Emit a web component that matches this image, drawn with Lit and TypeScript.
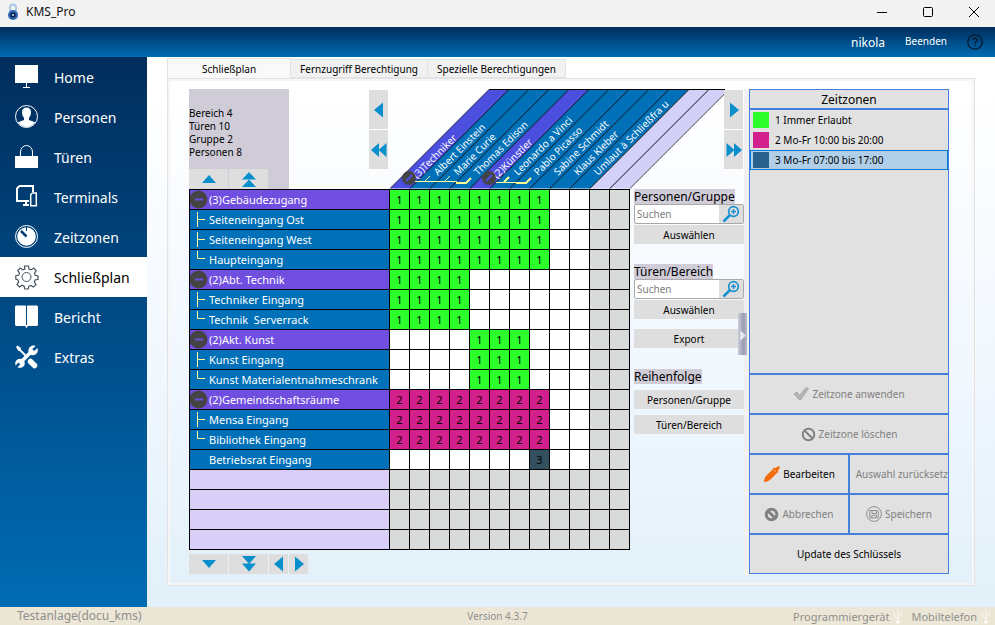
import { LitElement, html, svg, css, nothing } from "lit";
import { customElement, state } from "lit/decorators.js";
import { classMap } from "lit/directives/class-map.js";

type Kind = "group" | "mid" | "last" | "plain" | "empty";

interface Door {
  label: string;
  kind: Kind;
  cells: string;
}

const DOORS: Door[] = [
  { label: "(3)Gebäudezugang", kind: "group", cells: "11111111  " },
  { label: "Seiteneingang Ost", kind: "mid", cells: "11111111  " },
  { label: "Seiteneingang West", kind: "mid", cells: "11111111  " },
  { label: "Haupteingang", kind: "last", cells: "11111111  " },
  { label: "(2)Abt. Technik", kind: "group", cells: "1111      " },
  { label: "Techniker Eingang", kind: "mid", cells: "1111      " },
  { label: "Technik  Serverrack", kind: "last", cells: "1111      " },
  { label: "(2)Akt. Kunst", kind: "group", cells: "    111   " },
  { label: "Kunst Eingang", kind: "mid", cells: "    111   " },
  { label: "Kunst Materialentnahmeschrank", kind: "last", cells: "    111   " },
  { label: "(2)Gemeindschaftsräume", kind: "group", cells: "22222222  " },
  { label: "Mensa Eingang", kind: "mid", cells: "22222222  " },
  { label: "Bibliothek Eingang", kind: "last", cells: "22222222  " },
  { label: "Betriebsrat Eingang", kind: "plain", cells: "       3  " },
  { label: "", kind: "empty", cells: "" },
  { label: "", kind: "empty", cells: "" },
  { label: "", kind: "empty", cells: "" },
  { label: "", kind: "empty", cells: "" },
];

const PEOPLE: { name: string; kind: Kind }[] = [
  { name: "(3)Techniker", kind: "group" },
  { name: "Albert Einstein", kind: "mid" },
  { name: "Marie Curie", kind: "mid" },
  { name: "Thomas Edison", kind: "last" },
  { name: "(2)Künstler", kind: "group" },
  { name: "Leonardo a Vinci", kind: "mid" },
  { name: "Pablo Picasso", kind: "last" },
  { name: "Sabine Schmidt", kind: "plain" },
  { name: "Klaus Kleber", kind: "plain" },
  { name: "Umlaut ä Schließfra u", kind: "plain" },
  { name: "", kind: "empty" },
  { name: "", kind: "empty" },
];

const NAV = [
  "Home",
  "Personen",
  "Türen",
  "Terminals",
  "Zeitzonen",
  "Schließplan",
  "Bericht",
  "Extras",
];

const navIcons: Record<string, unknown> = {
  Home: svg`<path fill="#fff" d="M0 0h23v18H0z"/><path stroke="#fff" d="M11.5 18v4M8 22.500h7"/>`,
  Personen: svg`<circle cx="11.500" cy="11.500" r="11" fill="none" stroke="#fff"/>
    <path fill="#fff" d="M7 7c0-3 2-4.500 4.500-4.500S16 4 16 7c0 2.500-.8 4.500-2 5.700v2.300l6 2.200A10.500 10.500 0 0 1 11.500 22 10.500 10.500 0 0 1 3 17.200L9 15v-2.300C7.800 11.500 7 9.500 7 7z"/>`,
  Türen: svg`<path fill="#fff" d="M0 11h23v12H0z"/><path fill="none" stroke="#fff" d="M5.500 11V7a6 6.500 0 0 1 12 0v4"/>`,
  Terminals: svg`<path fill="none" stroke="#fff" stroke-width="2" d="M14 16H2V3.500L4.500 1H18v6M8 20h6M11 16v4"/>
    <path fill="none" stroke="#fff" stroke-width="1.500" d="M15.700 20.700V9.500L17.500 8h3.800v12.700z"/>`,
  Zeitzonen: svg`<circle cx="11.500" cy="11.500" r="11" fill="none" stroke="#fff"/><circle cx="11.500" cy="11.500" r="9.300" fill="#fff"/>
    <path stroke="#003c74" stroke-width="2.500" d="m6 6 5.500 5.500"/><path stroke="#003c74" stroke-width="1" d="M11.500 1.500V6"/>`,
  Schließplan: svg`<path fill="none" stroke="#44525f" stroke-width="1.200" d="M9.500 1h4l.6 3 2 .9 2.600-1.800 2.500 2.500-1.700 2.700.8 2 2.700.7v3.300l-2.800.7-.9 2 1.700 2.600-2.700 2.500-2.500-1.700-2 .9-.6 2.700h-3.400l-.7-2.800-2.100-.9-2.500 1.700-2.500-2.500 1.700-2.600-.9-2.100L.8 14v-3.300l2.900-.6.800-2L2.800 5.500l2.500-2.400L7.900 4.900l1.900-.8z"/>
    <circle cx="11.500" cy="12" r="4.500" fill="none" stroke="#44525f"/>`,
  Bericht: svg`<path fill="#fff" d="M0 1.500 1 .500h9.500l.5.500v20H1L0 20zM12 1l.5-.5H22l1 1V20l-1 1H12zM10.500 20h2v2l-1 1-1-1z"/>`,
  Extras: svg`<path stroke="#fff" stroke-width="1.800" d="m3 3 8 8"/><path fill="#fff" d="m1 2 1.500-1.500L6 3 5.500 5.500 3.500 6z"/>
    <path stroke="#fff" stroke-width="5.500" stroke-linecap="round" d="m15.500 16.500 4 4"/>
    <path stroke="#fff" stroke-width="3.600" d="M4.500 18.500 18 5"/>
    <path fill="#fff" d="M20.500.9 17 4.300l2 2 3.400-3.300c1.400 3.600-1 7.500-5 7.200-1.600 0-3.600-1.700-4-3.800C13 2.600 16.700-.4 20.500.9zM2.400 22.300l3.200-3.300-2-1.800-3 3.200c-1.300-3.800 1.400-7 5-6.600 2.200.1 4 2 4.200 4.200.3 3.400-3.700 6-7.400 4.300z"/>`,
};

const arrows: Record<string, string> = {
  up: "M3 14 10 6l7 8z",
  up2: "M3 10.500 10 3l7 7.500zM3 18l7-7.500 7 7.500z",
  down: "M3 6h14l-7 8z",
  down2: "M3 2h14l-7 8zM3 9.500h14l-7 8z",
  left: "M14 2.500v15L5 10z",
  left2: "M10 3v14L2 10zM17.500 3v14L9.500 10z",
  right: "M6 2.500v15L15 10z",
  right2: "M10 3v14l8-7zM2.500 3v14l8-7z",
};

const arrow = (kind: string, label: string, cls: string) => html`
  <button class="arrow ${cls}" aria-label=${label}>
    <svg width="20" height="20" viewBox="0 0 20 20"><path fill="#0a8fcd" d=${arrows[kind]} /></svg>
  </button>
`;

const usb = html`<svg width="10" height="16" viewBox="0 0 10 16" fill="none" stroke="#fbfaf5">
  <path d="M5 1v14M1.500 4v4L5 11M8.500 3v4L5 9" /><circle cx="5" cy="14" r="1.500" fill="#fbfaf5" />
</svg>`;

@customElement("window-bar")
export class WindowBar extends LitElement {
  static styles = css`
    :host { display: block; }
    .title { display: flex; align-items: center; height: 27px; padding: 0 14px 0 6px; background: #f3f3f3; color: #111; }
    .name { flex: 1; margin-left: 6px; font-size: 12px; line-height: 20px; padding-bottom: 4px; }
    .title .logo { margin-bottom: 4px; }
    .controls { display: flex; gap: 32px; padding-bottom: 4px; }
    button { padding: 0; border: 0; background: none; font: inherit; color: inherit; display: block; }
    button svg { display: block; }
    .user { display: flex; justify-content: flex-end; align-items: center; height: 30px; padding-right: 12px;
      background: linear-gradient(#002d5c, #006cb4); color: #fff; }
    .who { font-size: 12px; margin-right: 20px; }
    .user .quit { font-size: 10px; margin-right: 20px; padding-bottom: 2px; }
  `;

  render() {
    return html`
      <header class="title">
        <svg class="logo" width="14" height="18" viewBox="0 0 14 18">
          <path d="M4 8V4.500a3 3 0 0 1 6 0V8" fill="none" stroke="#a9c6e6" stroke-width="2" />
          <circle cx="7" cy="12" r="5" fill="#2f66b5" /><circle cx="7" cy="12" r="2" fill="#8db6ea" stroke="#0b2148" stroke-width="1.500" />
        </svg>
        <span class="name">KMS_Pro</span>
        <div class="controls">
          <button aria-label="Minimieren"><svg width="14" height="14"><path d="M2 7.500h10" stroke="#000" /></svg></button>
          <button aria-label="Maximieren"><svg width="14" height="14"><rect x="2.500" y="2.500" width="9" height="9" rx="1" fill="none" stroke="#000" /></svg></button>
          <button aria-label="Schließen"><svg width="14" height="14"><path d="m2 2 10 10M12 2 2 12" stroke="#000" /></svg></button>
        </div>
      </header>
      <div class="user">
        <span class="who">nikola</span>
        <button class="quit">Beenden</button>
        <button aria-label="Hilfe">
          <svg width="16" height="16" viewBox="0 0 16 16" fill="none" stroke="#03162b" stroke-width="1.300">
            <circle cx="8" cy="8" r="7.200" /><path d="M5.800 6.300C5.800 3.500 10.300 3.600 10.200 6.200 10.100 7.800 8 7.800 8 9.700M8 10.800v1.400" />
          </svg>
        </button>
      </div>
    `;
  }
}

@customElement("main-nav")
export class MainNav extends LitElement {
  @state() private active = "Schließplan";

  static styles = css`
    :host { display: block; background: linear-gradient(#002d5c, #006cb4); }
    a { display: flex; align-items: center; gap: 16px; height: 40px; padding-left: 15px; color: #fff; text-decoration: none; font-size: 14px; }
    a.active { background: #fff; color: #000; }
    svg { margin-bottom: 2px; overflow: visible; }
  `;

  render() {
    return html`<nav>
      ${NAV.map(
        (n) => html`<a href="#" class=${classMap({ active: n === this.active })} @click=${(e: Event) => { e.preventDefault(); this.active = n; }}>
          <svg width="23" height="23" viewBox="0 0 23 23" fill="none">${navIcons[n]}</svg><span>${n}</span>
        </a>`,
      )}
    </nav>`;
  }
}

@customElement("people-header")
export class PeopleHeader extends LitElement {
  static styles = css`
    :host { display: block; }
    svg { display: block; }
    .band { fill: #0070b8; stroke: #000; stroke-width: .7; }
    .band.group { fill: #4c4ee0; }
    .band.empty { fill: #d2d0f8; }
    .top { stroke: #000; shape-rendering: crispEdges; }
    text { fill: #fff; font-size: 10px; }
    .tree { fill: none; stroke: #ffff96; }
    .thick { stroke-width: 2; }
  `;

  render() {
    return html`<svg width="336" height="100" viewBox="0 0 336 100">
      ${PEOPLE.map((p, i) => svg`<path class="band ${p.kind}" d="M${i * 20 + 1} 99.500 l99 -99 h20 l-99 99" />`)}
      <path class="top" d="M100 .5H341" />
      <path class="tree" d="M26 92.500H68M36 92l5-5M56 92l5-5M107 93.500h20" />
      <path class="tree thick" d="M67 94h10l5-5M115 93l5-5M127 94h10l5-5" />
      ${PEOPLE.map((p, i) => svg`<text transform="translate(${i * 20 + (p.kind === "group" ? 28 : 29)} ${p.kind === "group" ? 90 : 87}) rotate(-45)">${p.name}</text>`)}
      ${PEOPLE.map((p, i) =>
        p.kind === "group"
          ? svg`<circle cx="${i * 20 + 20}" cy="89" r="7" fill="#444"/><path d="M${i * 20 + 17} 92l6-6" stroke="#4c4ee0" stroke-width="2"/>`
          : nothing,
      )}
    </svg>`;
  }
}

@customElement("lock-matrix")
export class LockMatrix extends LitElement {
  static styles = css`
    :host { display: block; }
    table { border-collapse: collapse; table-layout: fixed; width: 441px; }
    .names { width: 200px; }
    .unit { width: 20px; }
    th, td { box-sizing: border-box; height: 20px; padding: 0; border: 1px solid #000; line-height: 18px; overflow: hidden; }
    th { background: #0070b8; color: #fff; font-weight: 400; font-size: 11px; text-align: left; white-space: pre; }
    .row-head { display: flex; height: 19px; align-items: center; }
    .row-head svg { flex: none; }
    .group th { background: #704edf; }
    .empty th { background: #d9cef8; }
    td { background: #fff; font-size: 11px; text-align: center; color: #000; }
    .z1 { background: #2dff2d; }
    .z2 { background: #d4208c; }
    .z3 { background: #34505f; }
    .off { background: #d9dbdb; }
  `;

  private marker(kind: Kind) {
    switch (kind) {
      case "group":
        return svg`<circle cx="8.500" cy="9.500" r="9" fill="#444"/><path d="M5 9.500h8" stroke="#704edf" stroke-width="2"/>`;
      case "mid":
        return svg`<path d="M7.500 2v15M8 9.500h7" stroke="#ffff96"/>`;
      case "last":
        return svg`<path d="M7.500 1v7.500H15" stroke="#ffff96" fill="none"/>`;
      default:
        return nothing;
    }
  }

  render() {
    return html`<table>
      <colgroup><col class="names" />${PEOPLE.map(() => html`<col class="unit" />`)}</colgroup>
      <tbody>
        ${DOORS.map(
          (d) => html`<tr class=${d.kind}>
            <th scope="row"><div class="row-head"><svg width="19" height="19">${this.marker(d.kind)}</svg><span>${d.label}</span></div></th>
            ${PEOPLE.map((_, i) => {
              const v = (d.cells[i] ?? "").trim();
              const off = i >= d.cells.length;
              return html`<td class=${off ? "off" : v ? `z${v}` : ""}>${v}</td>`;
            })}
          </tr>`,
        )}
      </tbody>
    </table>`;
  }
}

@customElement("search-tools")
export class SearchTools extends LitElement {
  static styles = css`
    :host { display: flex; flex-direction: column; align-items: stretch; }
    .head { align-self: flex-start; background: #cfccd8; color: #000; font-size: 12px; line-height: 15px; }
    .box { display: flex; box-sizing: border-box; height: 20px; border: 1px solid #a9a9a9; border-radius: 2px; background: #fff; }
    input { flex: 1; min-width: 0; border: 0; padding: 0 2px; outline: 0; background: none; font: inherit; font-size: 10px; }
    input::placeholder { color: #7d7d7d; }
    button { padding: 0; border: 0; background: #dedede; color: #000; font: inherit; font-size: 10px; line-height: 18px; height: 19px; }
    .box .find { width: 24px; height: 18px; }
    .find svg { display: block; margin: 0 auto; }
    .pick { margin-top: 1px; }
    .section { display: flex; flex-direction: column; margin-bottom: 20px; }
    .export { margin-bottom: 21px; margin-top: -10px; }
    .order { gap: 6px; }
  `;

  private search(title: string, id: string) {
    return html`<div class="section">
      <label class="head" for=${id}>${title}</label>
      <div class="box">
        <input id=${id} placeholder="Suchen" />
        <button class="find" aria-label="Suchen">
          <svg width="18" height="18" viewBox="0 0 18 18" fill="none" stroke="#1590cf">
            <circle cx="11.500" cy="6.500" r="4.800" stroke-width="1.700" /><path d="M9 6.500h5M11.500 4v5" stroke-width="1.400" />
            <path d="m8 10-6.500 6.500" stroke-width="2.500" />
          </svg>
        </button>
      </div>
      <button class="pick">Auswählen</button>
    </div>`;
  }

  render() {
    return html`
      ${this.search("Personen/Gruppe", "persons")} ${this.search("Türen/Bereich", "doors")}
      <button class="export">Export</button>
      <div class="section order">
        <span class="head">Reihenfolge</span>
        <button>Personen/Gruppe</button>
        <button>Türen/Bereich</button>
      </div>
    `;
  }
}

@customElement("time-zones")
export class TimeZones extends LitElement {
  @state() private selected = 2;

  private zones = [
    { name: "1 Immer Erlaubt", cls: "z1" },
    { name: "2 Mo-Fr 10:00 bis 20:00", cls: "z2" },
    { name: "3 Mo-Fr 07:00 bis 17:00", cls: "z3" },
  ];

  static styles = css`
    :host { display: grid; grid-template-columns: 49fr 50fr; grid-template-rows: 20px 263px repeat(5, 40px); box-sizing: border-box;
      background: #e1e1e1; border: 1px solid #457fdc; font-size: 10px; }
    .wide { grid-column: 1 / -1; }
    h2 { margin: 0; font-size: 12px; font-weight: 400; line-height: 20px; text-align: center; border-bottom: 2px solid #457fdc; box-sizing: border-box; }
    ul { margin: 0; padding: 0; list-style: none; }
    li button { display: flex; align-items: center; gap: 6px; width: 100%; height: 20px; box-sizing: border-box; padding: 0 0 0 2px;
      border: 1px solid transparent; background: none; color: #000; font: inherit; text-align: left; }
    li .chosen { background: #b1cfe8; border-color: #0078d7; }
    .swatch { width: 16px; height: 16px; }
    .z1 { background: #2dff2d; }
    .z2 { background: #d4208c; }
    .z3 { background: #27618c; }
    .act { display: flex; align-items: center; justify-content: center; gap: 3px; min-width: 0; padding: 0; border: 0; border-top: 2px solid #457fdc;
      background: none; color: #000; font: inherit; white-space: nowrap; overflow: hidden; }
    .act:disabled { color: #808080; }
    .second { border-left: 2px solid #457fdc; }
    .cut { justify-content: flex-end; }
    .act svg { flex: none; }
  `;

  render() {
    return html`
      <h2 class="wide">Zeitzonen</h2>
      <ul class="wide">
        ${this.zones.map(
          (z, i) => html`<li>
            <button class=${classMap({ chosen: i === this.selected })} @click=${() => (this.selected = i)}>
              <span class="swatch ${z.cls}"></span><span>${z.name}</span>
            </button>
          </li>`,
        )}
      </ul>
      <button class="act wide" disabled>
        <svg width="16" height="16" viewBox="0 0 16 16"><path d="m1 8 3-2 2.500 3.500L13 1.500l2.500 1L8 13.500H6z" fill="#b5b5b5" stroke="#999" stroke-width=".7" /></svg>
        Zeitzone anwenden
      </button>
      <button class="act wide" disabled>
        <svg width="15" height="15" viewBox="0 0 15 15" fill="none" stroke="#808080" stroke-width="2"><circle cx="7.500" cy="7.500" r="5.800" /><path d="m3.500 3.500 8 8" /></svg>
        Zeitzone löschen
      </button>
      <button class="act">
        <svg width="17" height="17" viewBox="0 0 17 17"><path fill="#f26c0c" d="M1 16c0-3 1-5 3-7l5-5 2-2.500 1.200.8L15.500 0 17 1.700l-2.200 3 .7 1.300-2.500 2-5 5c-2 2-4 3-7 3z" /><path d="m10.500 3.500 3 3" stroke="#f9b27c" /></svg>
        Bearbeiten
      </button>
      <button class="act second cut" disabled>Auswahl zurücksetz</button>
      <button class="act" disabled>
        <svg width="15" height="15" viewBox="0 0 15 15" fill="none" stroke="#808080" stroke-width="3"><circle cx="7.500" cy="7.500" r="5.300" /><path d="m3.500 3.500 8 8" /></svg>
        Abbrechen
      </button>
      <button class="act second" disabled>
        <svg width="16" height="16" viewBox="0 0 16 16" fill="none" stroke="#8f8f8f"><circle cx="8" cy="8" r="7.400" /><path d="M3.800 4.500h7.700l.8.800v6.500H3.800z" /><path d="M6 4.500v3h4.500v-3M5.800 11.500V9.300h4.700v2.200" /></svg>
        Speichern
      </button>
      <button class="act wide">Update des Schlüssels</button>
    `;
  }
}

@customElement("app-root")
export class AppRoot extends LitElement {
  static styles = css`
    :host { display: flex; flex-direction: column; min-height: 100vh; font-family: "Noto Sans", "Open Sans", sans-serif; color: #000; }
    .body { flex: 1; display: grid; grid-template-columns: 147px 1fr; }
    main { display: flex; flex-direction: column; min-width: 0; padding: 1px 20px 21px; background: linear-gradient(#fff 5%, #f0f7fe 60%, #e2f0f9); }
    .tabs { display: flex; align-items: flex-end; height: 20px; }
    .tab { box-sizing: border-box; height: 19px; padding: 0 9px; border: 1px solid #e3e3e3; border-left-width: 0; background: #f1f1f1; color: #000; font: inherit; font-size: 10px; line-height: 16px; }
    .tab.on { height: 20px; padding: 0 34px; border-width: 1px; border-bottom: 0; background: #f9f9f9; }
    .panel { flex: 1; display: flex; align-items: flex-start; box-sizing: border-box; border: 1px solid #e3e3e3; outline: 2px solid #f6f6f6; outline-offset: -3px; padding: 10px 25px 10px 21px; }
    .plan { position: relative; display: grid; grid-template-columns: 441px 110px; column-gap: 4px; }
    .top { grid-column: 1 / -1; display: flex; align-items: flex-start; }
    .info { box-sizing: border-box; width: 100px; height: 100px; padding-top: 18px; background: #cfccd8; font-size: 10px; line-height: 13px; display: flex; flex-direction: column; justify-content: space-between; }
    .info p { margin: 0; }
    .pair { display: flex; gap: 1px; }
    .stack { display: flex; flex-direction: column; gap: 1px; }
    .stack.prev { margin: 1px 1px 0 80px; }
    .stack.next { margin-left: -1px; padding-top: 1px; }
    .arrow { display: flex; align-items: center; justify-content: center; padding: 0; border: 0; background: #dedede; overflow: hidden; }
    .arrow svg { flex: none; }
    .arrow.flat { width: 39px; height: 20px; }
    .arrow.tall { width: 19px; height: 39px; }
    .arrow.small { width: 19px; height: 20px; }
    .foot { display: flex; gap: 1px; padding-top: 4px; }
    .grip { position: absolute; right: -3px; top: 224px; width: 9px; height: 42px; padding: 0; border: 0; background: linear-gradient(90deg, #ccccdc, #9a9db4 60%, #b9bbca); }
    .grip svg { display: block; }
    .split { align-self: stretch; width: 5px; background: #f1f1f1; }
    time-zones { flex: 1; min-width: 160px; }
    footer { display: grid; grid-template-columns: 1fr auto 1fr; align-items: center; height: 18px; background: #ece6d7; color: #8f8f8c; font-size: 11px; overflow: hidden; }
    .site { padding-left: 17px; font-size: 12px; line-height: 18px; }
    .ver { font-size: 10px; }
    .dev { display: flex; justify-content: flex-end; align-items: center; gap: 4px; padding-right: 4px; white-space: nowrap; }
    .dev span + svg + span { margin-left: 4px; }
  `;

  render() {
    return html`
      <window-bar></window-bar>
      <div class="body">
        <main-nav></main-nav>
        <main>
          <div class="tabs">
            <button class="tab on">Schließplan</button>
            <button class="tab">Fernzugriff Berechtigung</button>
            <button class="tab">Spezielle Berechtigungen</button>
          </div>
          <section class="panel">
            <div class="plan">
              <div class="top">
                <div class="info">
                  <div><p>Bereich 4</p><p>Türen 10</p><p>Gruppe 2</p><p>Personen 8</p></div>
                  <div class="pair">${arrow("up", "Nach oben", "flat")}${arrow("up2", "Ganz nach oben", "flat")}</div>
                </div>
                <div class="stack prev">${arrow("left", "Zurück", "tall")}${arrow("left2", "Zum Anfang", "tall")}</div>
                <people-header></people-header>
                <div class="stack next">${arrow("right", "Weiter", "tall")}${arrow("right2", "Zum Ende", "tall")}</div>
              </div>
              <lock-matrix></lock-matrix>
              <search-tools></search-tools>
              <div class="foot">
                ${arrow("down", "Nach unten", "flat")}${arrow("down2", "Ganz nach unten", "flat")}${arrow("left", "Links", "small")}${arrow("right", "Rechts", "small")}
              </div>
              <button class="grip" aria-label="Leiste ausblenden"><svg width="9" height="42"><path d="M3 18.500v8l4-4z" fill="#dfe2ee" stroke="#fff" /></svg></button>
            </div>
            <div class="split"></div>
            <time-zones></time-zones>
          </section>
        </main>
      </div>
      <footer>
        <span class="site">Testanlage(docu_kms)</span>
        <span class="ver">Version 4.3.7</span>
        <span class="dev"><span>Programmiergerät</span>${usb}<span>Mobiltelefon</span>${usb}</span>
      </footer>
    `;
  }
}
